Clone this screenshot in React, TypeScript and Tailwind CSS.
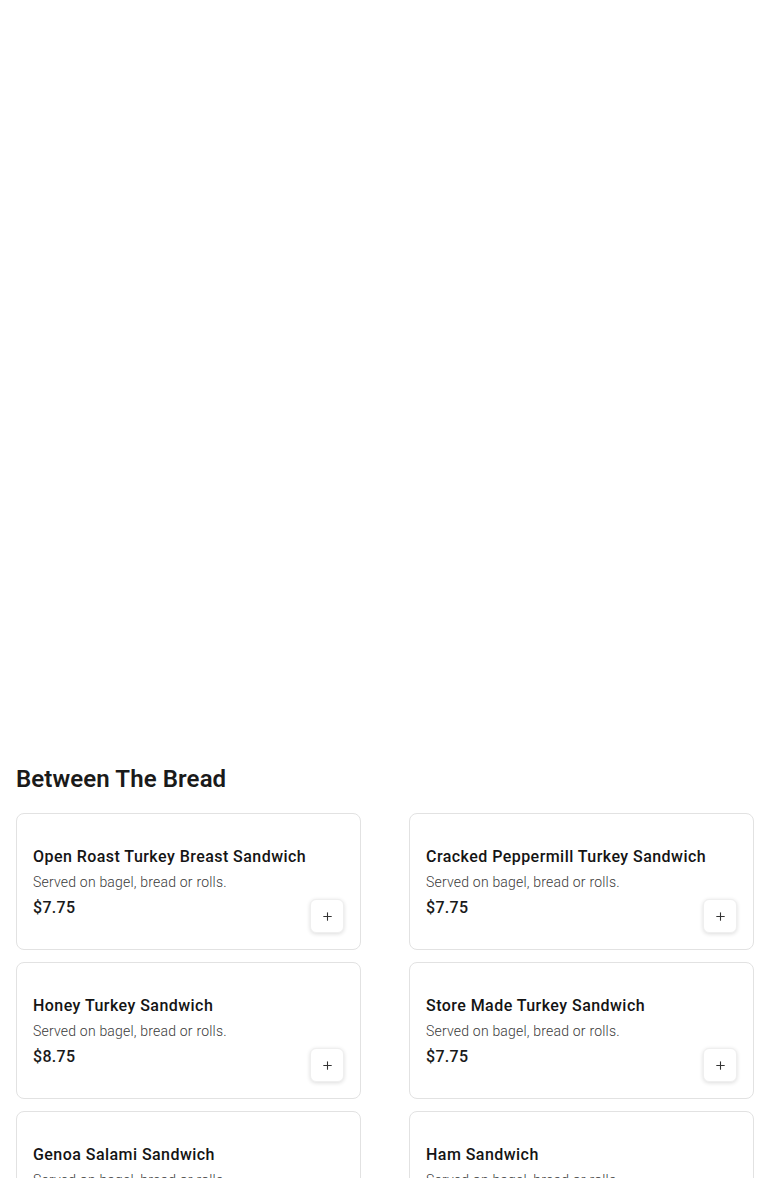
import { Plus } from "lucide-react";

interface MenuItem {
  name: string;
  description: string;
  price: string;
}

const ITEMS: MenuItem[] = [
  { name: "Open Roast Turkey Breast Sandwich", description: "Served on bagel, bread or rolls.", price: "$7.75" },
  { name: "Cracked Peppermill Turkey Sandwich", description: "Served on bagel, bread or rolls.", price: "$7.75" },
  { name: "Honey Turkey Sandwich", description: "Served on bagel, bread or rolls.", price: "$8.75" },
  { name: "Store Made Turkey Sandwich", description: "Served on bagel, bread or rolls.", price: "$7.75" },
  { name: "Genoa Salami Sandwich", description: "Served on bagel, bread or rolls.", price: "$7.75" },
  { name: "Ham Sandwich", description: "Served on bagel, bread or rolls.", price: "$7.75" },
];

function ItemCard({ item }: { item: MenuItem }) {
  return (
    <div className="flex h-[137px] rounded-lg border border-[#e2e2e2] bg-white p-4">
      <div className="flex min-w-0 flex-1 flex-col justify-center pt-[2px]">
        <p className="whitespace-nowrap text-base leading-6 font-medium tracking-[0.45px] text-[#141414]">{item.name}</p>
        <p className="mt-[3px] text-sm leading-5 font-light tracking-[0.2px] text-[#3a3a3a]">{item.description}</p>
        <p className="mt-[4px] text-base leading-6 font-medium tracking-[0.3px] text-[#1a1a1a]">{item.price}</p>
      </div>
      <button
        type="button"
        className="flex h-[34px] w-[34px] shrink-0 items-center justify-center self-end rounded-md border border-[#efefef] bg-white shadow-[0_1px_4px_rgba(0,0,0,0.14)]"
      >
        <Plus className="h-[13px] w-[13px] text-[#333]" strokeWidth={2} />
      </button>
    </div>
  );
}

export default function App() {
  return (
    <div className="min-h-screen bg-white font-['Roboto',sans-serif]">
      <div className="h-[763px]" />
      <section className="px-4">
        <h2 className="mb-[18px] text-2xl leading-8 font-semibold tracking-[0.1px] text-[#1a1a1a]">Between The Bread</h2>
        <div className="grid grid-cols-2 gap-x-12 gap-y-3">
          {ITEMS.map((item) => (
            <ItemCard key={item.name} item={item} />
          ))}
        </div>
      </section>
    </div>
  );
}
